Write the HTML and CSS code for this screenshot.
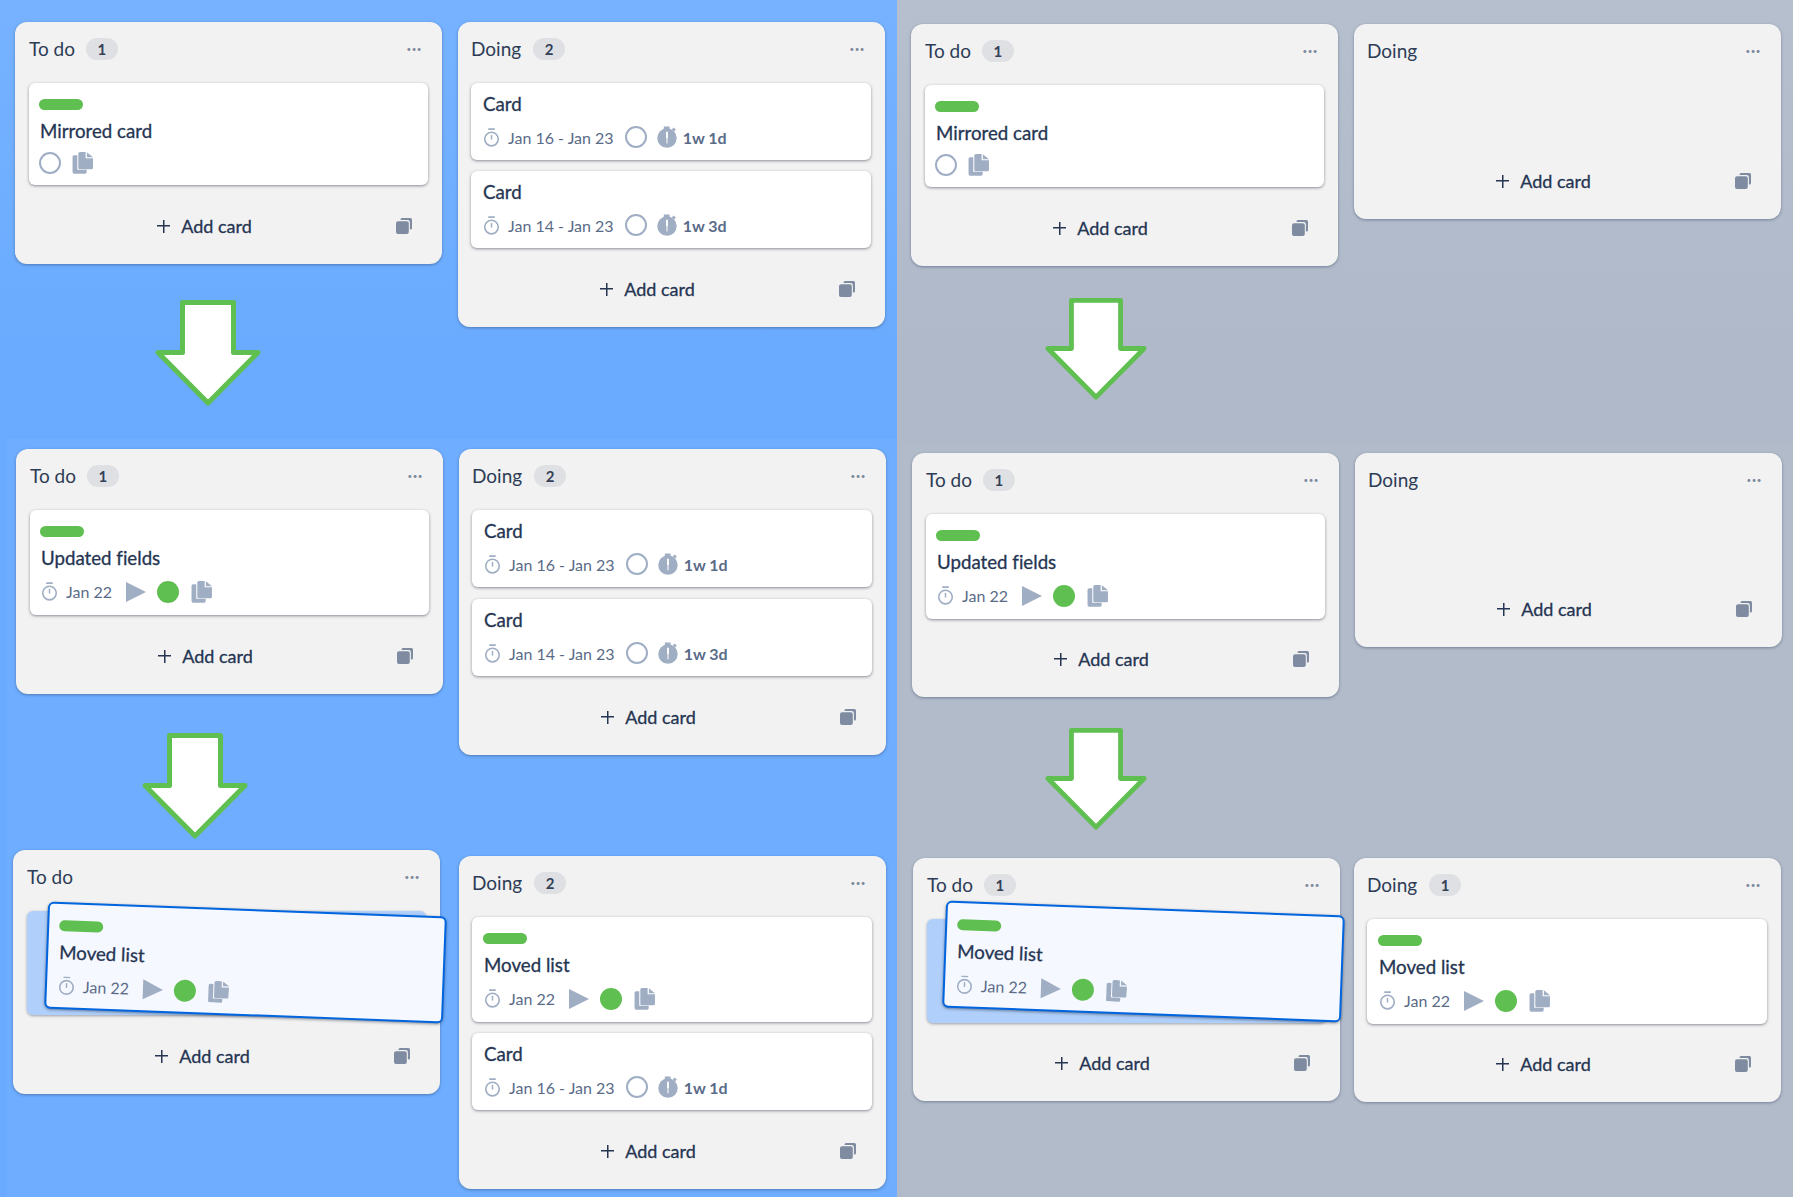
FILE: index.html
```html
<!DOCTYPE html>
<html lang="en">
<head>
    <meta charset="UTF-8">
    <title>Mirrored cards</title>
    <link rel="stylesheet" href="styles.css">
</head>
<body>
    <svg class="sprite" xmlns="http://www.w3.org/2000/svg">
        <symbol id="i-watch" viewBox="0 0 16 18">
            <path d="M5.5 1h5" fill="none" stroke="currentColor" stroke-width="1.6" stroke-linecap="round"/>
            <circle cx="8" cy="10.5" r="6.4" fill="none" stroke="currentColor" stroke-width="1.5"/>
            <path d="M8 7v3.5" fill="none" stroke="currentColor" stroke-width="1.4" stroke-linecap="round"/>
        </symbol>
        <symbol id="i-spent" viewBox="0 0 20 21">
            <path d="M6.5 0.5h5.5v4h-5.5zM15.8 1.5l2.2 1.9-1.8 1.9-2.1-1.9z" fill="currentColor"/>
            <circle cx="9.5" cy="11.5" r="9.3" fill="currentColor"/>
            <path d="M9.5 5.5v6" stroke="#fff" stroke-width="1.8"/>
            <path d="M9.5 11.5v5" stroke="#fff" stroke-width="1"/>
        </symbol>
        <symbol id="i-docs" viewBox="0 0 20 21">
            <path d="M0.5 4.5a1.5 1.5 0 0 1 1.5-1.5h3v14h9v2.2a1.5 1.5 0 0 1-1.5 1.5H2a1.5 1.5 0 0 1-1.5-1.5z" fill="currentColor"/>
            <path d="M6 1.5a1.5 1.5 0 0 1 1.5-1.5h5.5v6h7v9a1.5 1.5 0 0 1-1.5 1.5H7.5a1.5 1.5 0 0 1-1.5-1.5z" fill="currentColor"/>
            <path d="M14.2 .2l5.8 4.7h-5.8z" fill="currentColor"/>
        </symbol>
        <symbol id="i-copy" viewBox="0 0 16 16">
            <path d="M4.5 1.5A1.5 1.5 0 0 1 6 0h8.5A1.5 1.5 0 0 1 16 1.5V10a1.5 1.5 0 0 1-1.5 1.5h-.6V4.4a2.3 2.3 0 0 0-2.3-2.3H4.5z" fill="currentColor"/>
            <rect x="0" y="3.2" width="12.8" height="12.8" rx="2" fill="currentColor"/>
        </symbol>
        <symbol id="i-arrow" viewBox="0 0 106 106">
            <polygon points="27.5,2.5 78.5,2.5 78.5,52.5 103,52.5 53,103 3,52.5 27.5,52.5" fill="#fff" stroke="#5fbf50" stroke-width="5" stroke-linejoin="round"/>
        </symbol>
    </svg>

    <div class="board">
        <section class="panel panel-blue">
            <div class="row row-a">
                <div class="col">
                    <div class="list">
                        <div class="list-head"><span class="list-title">To do</span><span class="count">1</span><span class="dots">•••</span></div>
                        <div class="cards">
                            <div class="card card-labelled">
                                <div class="label"></div>
                                <div class="card-title">Mirrored card</div>
                                <div class="meta">
                                    <span class="ring"></span>
                                    <svg class="docs"><use href="#i-docs"/></svg>
                                </div>
                            </div>
                        </div>
                        <div class="list-foot"><div class="add"><span class="plus"></span>Add card</div><svg class="copy"><use href="#i-copy"/></svg></div>
                    </div>
                    <svg class="arrow arrow-1"><use href="#i-arrow"/></svg>
                </div>
                <div class="col">
                    <div class="list">
                        <div class="list-head"><span class="list-title">Doing</span><span class="count">2</span><span class="dots">•••</span></div>
                        <div class="cards">
                            <div class="card">
                                <div class="card-title">Card</div>
                                <div class="meta">
                                    <svg class="watch"><use href="#i-watch"/></svg>
                                    <span class="date">Jan 16 - Jan 23</span>
                                    <span class="ring"></span>
                                    <svg class="spent"><use href="#i-spent"/></svg>
                                    <span class="duration">1w 1d</span>
                                </div>
                            </div>
                            <div class="card">
                                <div class="card-title">Card</div>
                                <div class="meta">
                                    <svg class="watch"><use href="#i-watch"/></svg>
                                    <span class="date">Jan 14 - Jan 23</span>
                                    <span class="ring"></span>
                                    <svg class="spent"><use href="#i-spent"/></svg>
                                    <span class="duration">1w 3d</span>
                                </div>
                            </div>
                        </div>
                        <div class="list-foot"><div class="add"><span class="plus"></span>Add card</div><svg class="copy"><use href="#i-copy"/></svg></div>
                    </div>
                </div>
            </div>

            <div class="row row-b">
                <div class="col">
                    <div class="list">
                        <div class="list-head"><span class="list-title">To do</span><span class="count">1</span><span class="dots">•••</span></div>
                        <div class="cards">
                            <div class="card card-labelled">
                                <div class="label"></div>
                                <div class="card-title">Updated fields</div>
                                <div class="meta meta-dated">
                                    <svg class="watch"><use href="#i-watch"/></svg>
                                    <span class="date">Jan 22</span>
                                    <span class="play"></span>
                                    <span class="dot-done"></span>
                                    <svg class="docs"><use href="#i-docs"/></svg>
                                </div>
                            </div>
                        </div>
                        <div class="list-foot"><div class="add"><span class="plus"></span>Add card</div><svg class="copy"><use href="#i-copy"/></svg></div>
                    </div>
                    <svg class="arrow arrow-2"><use href="#i-arrow"/></svg>
                </div>
                <div class="col">
                    <div class="list">
                        <div class="list-head"><span class="list-title">Doing</span><span class="count">2</span><span class="dots">•••</span></div>
                        <div class="cards">
                            <div class="card">
                                <div class="card-title">Card</div>
                                <div class="meta">
                                    <svg class="watch"><use href="#i-watch"/></svg>
                                    <span class="date">Jan 16 - Jan 23</span>
                                    <span class="ring"></span>
                                    <svg class="spent"><use href="#i-spent"/></svg>
                                    <span class="duration">1w 1d</span>
                                </div>
                            </div>
                            <div class="card">
                                <div class="card-title">Card</div>
                                <div class="meta">
                                    <svg class="watch"><use href="#i-watch"/></svg>
                                    <span class="date">Jan 14 - Jan 23</span>
                                    <span class="ring"></span>
                                    <svg class="spent"><use href="#i-spent"/></svg>
                                    <span class="duration">1w 3d</span>
                                </div>
                            </div>
                        </div>
                        <div class="list-foot"><div class="add"><span class="plus"></span>Add card</div><svg class="copy"><use href="#i-copy"/></svg></div>
                    </div>
                </div>
            </div>

            <div class="row row-c">
                <div class="col">
                    <div class="list">
                        <div class="list-head"><span class="list-title">To do</span><span class="dots">•••</span></div>
                        <div class="cards">
                            <div class="card-slot">
                                <div class="card card-labelled card-moved">
                                    <div class="label"></div>
                                    <div class="card-title">Moved list</div>
                                    <div class="meta meta-dated">
                                        <svg class="watch"><use href="#i-watch"/></svg>
                                        <span class="date">Jan 22</span>
                                        <span class="play"></span>
                                        <span class="dot-done"></span>
                                        <svg class="docs"><use href="#i-docs"/></svg>
                                    </div>
                                </div>
                            </div>
                        </div>
                        <div class="list-foot"><div class="add"><span class="plus"></span>Add card</div><svg class="copy"><use href="#i-copy"/></svg></div>
                    </div>
                </div>
                <div class="col col-lower">
                    <div class="list">
                        <div class="list-head"><span class="list-title">Doing</span><span class="count">2</span><span class="dots">•••</span></div>
                        <div class="cards">
                            <div class="card card-labelled">
                                <div class="label"></div>
                                <div class="card-title">Moved list</div>
                                <div class="meta meta-dated">
                                    <svg class="watch"><use href="#i-watch"/></svg>
                                    <span class="date">Jan 22</span>
                                    <span class="play"></span>
                                    <span class="dot-done"></span>
                                    <svg class="docs"><use href="#i-docs"/></svg>
                                </div>
                            </div>
                            <div class="card">
                                <div class="card-title">Card</div>
                                <div class="meta">
                                    <svg class="watch"><use href="#i-watch"/></svg>
                                    <span class="date">Jan 16 - Jan 23</span>
                                    <span class="ring"></span>
                                    <svg class="spent"><use href="#i-spent"/></svg>
                                    <span class="duration">1w 1d</span>
                                </div>
                            </div>
                        </div>
                        <div class="list-foot"><div class="add"><span class="plus"></span>Add card</div><svg class="copy"><use href="#i-copy"/></svg></div>
                    </div>
                </div>
            </div>
        </section>

        <section class="panel panel-grey">
            <div class="row row-d">
                <div class="col">
                    <div class="list">
                        <div class="list-head"><span class="list-title">To do</span><span class="count">1</span><span class="dots">•••</span></div>
                        <div class="cards">
                            <div class="card card-labelled">
                                <div class="label"></div>
                                <div class="card-title">Mirrored card</div>
                                <div class="meta">
                                    <span class="ring"></span>
                                    <svg class="docs"><use href="#i-docs"/></svg>
                                </div>
                            </div>
                        </div>
                        <div class="list-foot"><div class="add"><span class="plus"></span>Add card</div><svg class="copy"><use href="#i-copy"/></svg></div>
                    </div>
                    <svg class="arrow arrow-3"><use href="#i-arrow"/></svg>
                </div>
                <div class="col">
                    <div class="list">
                        <div class="list-head"><span class="list-title">Doing</span><span class="dots">•••</span></div>
                        <div class="cards cards-empty"></div>
                        <div class="list-foot"><div class="add"><span class="plus"></span>Add card</div><svg class="copy"><use href="#i-copy"/></svg></div>
                    </div>
                </div>
            </div>

            <div class="row row-e">
                <div class="col">
                    <div class="list">
                        <div class="list-head"><span class="list-title">To do</span><span class="count">1</span><span class="dots">•••</span></div>
                        <div class="cards">
                            <div class="card card-labelled">
                                <div class="label"></div>
                                <div class="card-title">Updated fields</div>
                                <div class="meta meta-dated">
                                    <svg class="watch"><use href="#i-watch"/></svg>
                                    <span class="date">Jan 22</span>
                                    <span class="play"></span>
                                    <span class="dot-done"></span>
                                    <svg class="docs"><use href="#i-docs"/></svg>
                                </div>
                            </div>
                        </div>
                        <div class="list-foot"><div class="add"><span class="plus"></span>Add card</div><svg class="copy"><use href="#i-copy"/></svg></div>
                    </div>
                    <svg class="arrow arrow-4"><use href="#i-arrow"/></svg>
                </div>
                <div class="col">
                    <div class="list">
                        <div class="list-head"><span class="list-title">Doing</span><span class="dots">•••</span></div>
                        <div class="cards cards-empty"></div>
                        <div class="list-foot"><div class="add"><span class="plus"></span>Add card</div><svg class="copy"><use href="#i-copy"/></svg></div>
                    </div>
                </div>
            </div>

            <div class="row row-f">
                <div class="col">
                    <div class="list">
                        <div class="list-head"><span class="list-title">To do</span><span class="count">1</span><span class="dots">•••</span></div>
                        <div class="cards">
                            <div class="card-slot">
                                <div class="card card-labelled card-moved card-moved-up">
                                    <div class="label"></div>
                                    <div class="card-title">Moved list</div>
                                    <div class="meta meta-dated">
                                        <svg class="watch"><use href="#i-watch"/></svg>
                                        <span class="date">Jan 22</span>
                                        <span class="play"></span>
                                        <span class="dot-done"></span>
                                        <svg class="docs"><use href="#i-docs"/></svg>
                                    </div>
                                </div>
                            </div>
                        </div>
                        <div class="list-foot"><div class="add"><span class="plus"></span>Add card</div><svg class="copy"><use href="#i-copy"/></svg></div>
                    </div>
                </div>
                <div class="col">
                    <div class="list">
                        <div class="list-head"><span class="list-title">Doing</span><span class="count">1</span><span class="dots">•••</span></div>
                        <div class="cards">
                            <div class="card card-labelled">
                                <div class="label"></div>
                                <div class="card-title">Moved list</div>
                                <div class="meta meta-dated">
                                    <svg class="watch"><use href="#i-watch"/></svg>
                                    <span class="date">Jan 22</span>
                                    <span class="play"></span>
                                    <span class="dot-done"></span>
                                    <svg class="docs"><use href="#i-docs"/></svg>
                                </div>
                            </div>
                        </div>
                        <div class="list-foot"><div class="add"><span class="plus"></span>Add card</div><svg class="copy"><use href="#i-copy"/></svg></div>
                    </div>
                </div>
            </div>
        </section>
    </div>
</body>
</html>
```

FILE: styles.css
```css
:root {
    --ink: #253552;
    --date-ink: #5a6b88;
    --icon: #a0aec4;
    --green: #5fbf50;
    --list-bg: #f2f2f2;
}

* {
    box-sizing: border-box;
}

body {
    margin: 0;
    font-family: Lato, "Liberation Sans", sans-serif;
    font-variant-ligatures: none;
    color: var(--ink);
}

.sprite {
    display: none;
}

.board {
    display: flex;
    width: 1793px;
    height: 1197px;
    overflow: hidden;
}

.panel {
    display: flex;
    flex-direction: column;
}

.panel-blue {
    width: 897px;
    background: linear-gradient(#76b2ff, #6aabff 30%);
}

.panel-grey {
    width: 896px;
    background: linear-gradient(#b6bfce, #b0b9c9 30%);
}

/* rows of lists: each row was a separate capture, so each has its own offset */
.row {
    display: flex;
    align-items: flex-start;
    gap: 16px;
}

.row-a {
    height: 449px;
    padding: 22px 0 0 15px;
}

.row-b {
    height: 411px;
    margin: -10px 0 0 7px;
    padding: 10px 0 0 9px;
    background: #6eadff;
}

.row-c {
    flex: 1;
    margin: -5px 0 0 7px;
    padding: 5px 0 0 6px;
    gap: 19px;
    background: #6eadff;
}

.row-d {
    height: 453px;
    padding: 24px 0 0 14px;
}

.row-e {
    height: 415px;
    margin: -10px 0 0 6px;
    padding: 10px 0 0 9px;
    background: #b2bbca;
}

.row-f {
    flex: 1;
    margin: -5px 0 0 5px;
    padding: 5px 0 0 11px;
    gap: 14px;
    background: #b2bbca;
}

.col {
    display: flex;
    flex-direction: column;
    align-items: flex-start;
    width: 427px;
}

.col-lower {
    margin-top: 6px;
}

.arrow {
    width: 106px;
    height: 106px;
}

.arrow-1 {
    margin: 36px 0 0 140px;
}

.arrow-2 {
    margin: 39px 0 0 126px;
}

.arrow-3 {
    width: 102px;
    height: 102px;
    margin: 32px 0 0 134px;
}

.arrow-4 {
    width: 102px;
    height: 102px;
    margin: 31px 0 0 133px;
}

.list {
    width: 427px;
    padding: 0 14px;
    background: var(--list-bg);
    border-radius: 12px;
    box-shadow: 0 1px 3px rgba(40, 60, 90, 0.45);
}

.list-head {
    display: flex;
    align-items: center;
    height: 54px;
    margin-bottom: 7px;
}

.list-title {
    padding-bottom: 1px;
    font-size: 19px;
    color: #2d3c56;
}

.col + .col .list-title {
    margin-left: -1px;
    margin-right: 1px;
}

.count {
    width: 32px;
    height: 22px;
    margin-left: 11px;
    border-radius: 11px;
    background: #dfe0e3;
    font-size: 15px;
    font-weight: 700;
    line-height: 22px;
    text-align: center;
    color: #344058;
}

.dots {
    margin-left: auto;
    margin-right: 6px;
    font-size: 8px;
    letter-spacing: 0.5px;
    color: #7d8a9e;
}

.cards {
    display: flex;
    flex-direction: column;
    gap: 11px;
}

.cards-empty {
    height: 55px;
}

.col + .col .cards {
    margin-left: -1px;
}

.col + .col .card {
    padding-left: 12px;
}

.row-b .card + .card {
    margin-top: 1px;
}

.card {
    padding: 9px 11px 12px;
    background: #fff;
    border-radius: 6px;
    box-shadow: 0 1px 3px rgba(30, 40, 60, 0.5);
}

.card-labelled {
    padding-bottom: 11px;
}

.label {
    width: 44px;
    height: 11px;
    margin: 7px 0 9px -1px;
    border-radius: 6px;
    background: var(--green);
}

.card-title {
    font-size: 18.7px;
    line-height: 24px;
    -webkit-text-stroke: 0.3px var(--ink);
}

.meta {
    display: flex;
    align-items: center;
    height: 22px;
    margin-top: 10px;
    color: var(--icon);
}

.card-labelled .meta {
    margin-top: 9px;
}

.card-labelled .meta-dated {
    height: 25px;
}

.watch {
    width: 17px;
    height: 19px;
}

.date {
    margin-left: 8px;
    font-size: 16px;
    color: var(--date-ink);
}

.ring {
    width: 22px;
    height: 22px;
    margin-left: -1px;
    border: 2px solid var(--icon);
    border-radius: 50%;
    background: #fff;
}

.date + .ring {
    margin-left: 11px;
}

.spent {
    width: 21px;
    height: 22px;
    margin-left: 10px;
}

.duration {
    margin-left: 5px;
    font-size: 16px;
    font-weight: 700;
    color: var(--date-ink);
}

.play {
    width: 0;
    height: 0;
    margin-left: 14px;
    border-style: solid;
    border-width: 10px 0 10px 20px;
    border-color: transparent transparent transparent var(--icon);
}

.dot-done {
    width: 22px;
    height: 22px;
    margin-left: 11px;
    border-radius: 50%;
    background: var(--green);
}

.docs {
    width: 21px;
    height: 22px;
    margin-left: 11px;
}

.dot-done + .docs {
    margin-left: 12px;
}

.list-foot {
    display: flex;
    align-items: center;
    height: 76px;
    margin-top: 3px;
}

.row-e .list-foot,
.row-f .list-foot {
    margin-top: 2px;
}

.add {
    flex: 1;
    display: flex;
    align-items: center;
    justify-content: center;
    font-size: 18px;
    -webkit-text-stroke: 0.3px var(--ink);
}

.plus {
    width: 13px;
    height: 13px;
    margin-right: 11px;
    background:
        linear-gradient(var(--ink), var(--ink)) center / 100% 1.5px no-repeat,
        linear-gradient(var(--ink), var(--ink)) center / 1.5px 100% no-repeat;
}

.copy {
    width: 16px;
    height: 16px;
    margin: 0 16px;
    color: #7f8ba0;
}

.card-slot {
    position: relative;
    height: 104px;
    border-radius: 6px;
    background: #b0d0fb;
    box-shadow: 0 1px 3px rgba(30, 40, 60, 0.4);
}

.row-f .card-slot {
    margin-top: 0;
}

.card-moved {
    position: absolute;
    top: -2px;
    left: 19px;
    width: 399px;
    height: 107px;
    padding: 9px 11px;
    background: #f5f8ff;
    border: 2px solid #0065de;
    transform: rotate(2.15deg);
}

.card-moved .meta {
    margin-top: 9px;
}

.card-moved-up {
    top: -11px;
    left: 17px;
}
```
